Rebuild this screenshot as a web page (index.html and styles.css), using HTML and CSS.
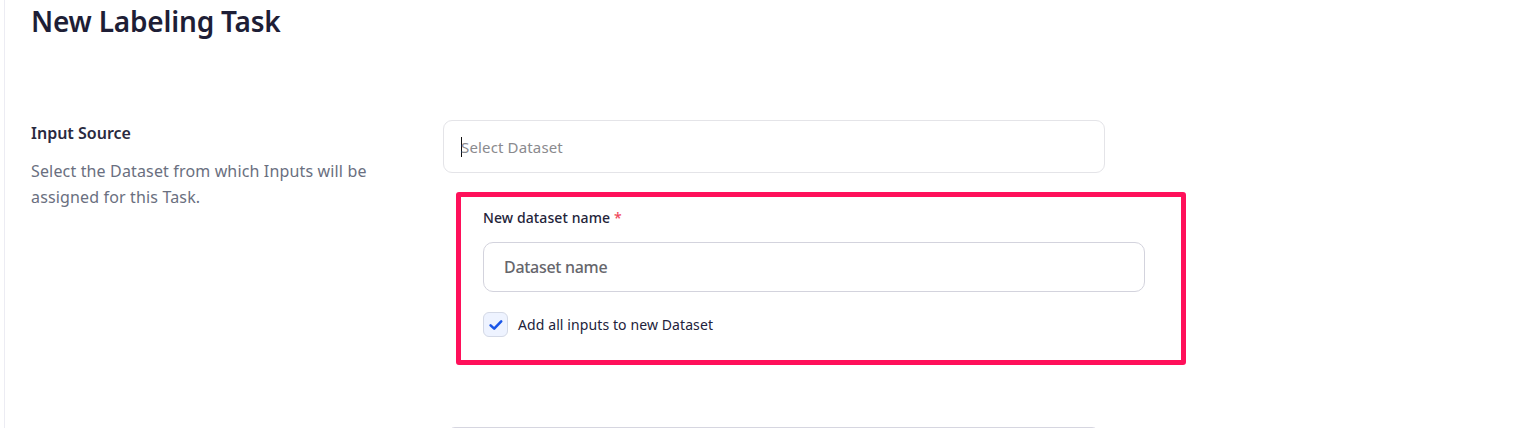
FILE: index.html
```html
<!DOCTYPE html>
<html lang="en">
<head>
<meta charset="utf-8">
<title>New Labeling Task</title>
<link rel="stylesheet" href="styles.css">
</head>
<body>
<div class="page">
  <main class="main">
    <h1 class="title">New Labeling Task</h1>
    <section class="row">
      <div class="row-info">
        <h2 class="row-title">Input Source</h2>
        <p class="row-desc">Select the Dataset from which Inputs will be assigned for this Task.</p>
      </div>
      <div class="row-fields">
        <div class="select">
          <span class="caret"></span><span class="select-placeholder">Select Dataset</span>
        </div>
        <div class="highlight">
          <label class="field-label">New dataset name <span class="req">*</span></label>
          <input class="text-input" type="text" placeholder="Dataset name">
          <label class="check-row">
            <span class="checkbox">
              <svg width="18" height="18" viewBox="0 0 18 18"><path d="M3.6 9.4 L7.2 12.6 L14.2 5.4" fill="none" stroke="#1a56e8" stroke-width="2.6" stroke-linecap="round" stroke-linejoin="round"/></svg>
            </span>
            <span class="check-text">Add all inputs to new Dataset</span>
          </label>
        </div>
      </div>
    </section>
    <section class="row next-row">
      <div class="row-info"></div>
      <div class="row-fields">
        <div class="next-field"></div>
      </div>
    </section>
  </main>
</div>
</body>
</html>
```
FILE: styles.css
```css
* { box-sizing: border-box; }
html, body { margin: 0; padding: 0; background: #fff; overflow: hidden; }
body {
  font-family: "Noto Sans", "Open Sans", sans-serif;
  color: #22223a;
  height: 428px;
}
.page {
  padding-left: 4px;
  height: 100%;
}
.main {
  border-left: 1px solid #ececf3;
  height: 100%;
  overflow: hidden;
  padding-left: 26px;
}
.title {
  margin: 0;
  padding-top: 2px;
  font-size: 28px;
  line-height: 38px;
  font-weight: 600;
  color: #1e1e36;
  letter-spacing: -0.2px;
}
.row {
  display: flex;
  margin-top: 80px;
}
.row-info {
  width: 412px;
  flex: none;
}
.row-title {
  margin: 2px 0 0;
  font-size: 16px;
  line-height: 22px;
  font-weight: 600;
  color: #2a2a40;
}
.row-desc {
  margin: 14px 0 0;
  font-size: 16px;
  line-height: 26px;
  color: #6a6f80;
  letter-spacing: 0.15px;
  width: 370px;
}
.row-fields {
  width: 743px;
}
.select {
  width: 662px;
  height: 53px;
  border: 1px solid #e4e4e8;
  border-radius: 9px;
  display: flex;
  align-items: center;
  padding-left: 17px;
}
.caret {
  width: 1px;
  height: 20px;
  background: #111;
  margin-right: -1px;
}
.select-placeholder {
  font-size: 15px;
  color: #8a8a8e;
  letter-spacing: 0.15px;
}
.highlight {
  margin: 19px 0 0 13px;
  width: 730px;
  border: 5px solid #ff105a;
  border-radius: 3px;
  padding: 11px 36px 23px 22px;
}
.field-label {
  display: block;
  font-size: 14px;
  line-height: 20px;
  font-weight: 500;
  color: #24243a;
  letter-spacing: 0.1px;
}
.req { color: #f04a5c; }
.text-input {
  display: block;
  margin-top: 14px;
  width: 662px;
  height: 50px;
  border: 1px solid #d3d3dd;
  border-radius: 10px;
  padding: 0 20px;
  font-family: inherit;
  font-size: 16px;
  outline: none;
}
.text-input::placeholder {
  color: #66666c;
  font-weight: 500;
  letter-spacing: -0.3px;
}
.check-row {
  display: flex;
  align-items: center;
  gap: 10px;
  margin-top: 20px;
}
.checkbox {
  width: 25px;
  height: 25px;
  border: 1px solid #d4d9e6;
  background: #eef3ff;
  border-radius: 6px;
  display: flex;
  align-items: center;
  justify-content: center;
}
.checkbox svg { display: block; }
.check-text {
  font-size: 14px;
  color: #22223a;
  letter-spacing: 0.1px;
}
.next-row {
  margin-top: 62px;
}
.next-field {
  margin-left: 4px;
  width: 653px;
  height: 40px;
  border: 1px solid #d6d6e0;
  border-radius: 8px;
}
```
